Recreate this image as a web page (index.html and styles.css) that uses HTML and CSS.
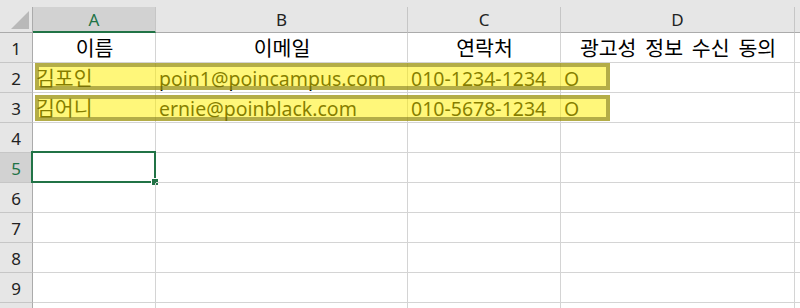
FILE: index.html
```html
<!DOCTYPE html>
<html lang="ko">
<head>
<meta charset="utf-8">
<title>Sheet</title>
<link rel="stylesheet" href="styles.css">
</head>
<body>
<div class="sheet">
  <div class="topstrip"></div>
  <div class="grid">
    <div class="corner">
      <svg class="tri" width="18" height="18" viewBox="0 0 18 18"><polygon points="18,0 18,18 0,18" fill="#b9b9b9"/></svg>
    </div>
    <div class="colh sel">A</div>
    <div class="colh">B</div>
    <div class="colh">C</div>
    <div class="colh">D</div>
    <div class="colh last"></div>

    <div class="rowh">1</div>
    <div class="cell center ko">이름</div>
    <div class="cell center ko">이메일</div>
    <div class="cell center ko">연락처</div>
    <div class="cell center ko wide">광고성 정보 수신 동의</div>
    <div class="cell"></div>

    <div class="rowh">2</div>
    <div class="cell ko">김포인</div>
    <div class="cell">poin1@poincampus.com</div>
    <div class="cell">010-1234-1234</div>
    <div class="cell">O</div>
    <div class="cell"></div>

    <div class="rowh">3</div>
    <div class="cell ko">김어니</div>
    <div class="cell">ernie@poinblack.com</div>
    <div class="cell">010-5678-1234</div>
    <div class="cell">O</div>
    <div class="cell"></div>

    <div class="rowh">4</div>
    <div class="cell"></div><div class="cell"></div><div class="cell"></div><div class="cell"></div><div class="cell"></div>

    <div class="rowh sel">5</div>
    <div class="cell active"><div class="selbox"><div class="handle"></div></div></div>
    <div class="cell"></div><div class="cell"></div><div class="cell"></div><div class="cell"></div>

    <div class="rowh">6</div>
    <div class="cell"></div><div class="cell"></div><div class="cell"></div><div class="cell"></div><div class="cell"></div>

    <div class="rowh">7</div>
    <div class="cell"></div><div class="cell"></div><div class="cell"></div><div class="cell"></div><div class="cell"></div>

    <div class="rowh">8</div>
    <div class="cell"></div><div class="cell"></div><div class="cell"></div><div class="cell"></div><div class="cell"></div>

    <div class="rowh">9</div>
    <div class="cell"></div><div class="cell"></div><div class="cell"></div><div class="cell"></div><div class="cell"></div>

    <div class="rowh"></div>
    <div class="cell"></div><div class="cell"></div><div class="cell"></div><div class="cell"></div><div class="cell"></div>
  </div>
  <div class="hl r2"></div>
  <div class="hl r3"></div>
</div>
</body>
</html>
```

FILE: styles.css
```css
html, body {
  margin: 0;
  padding: 0;
  background: #ffffff;
  overflow: hidden;
}

.sheet {
  position: relative;
  width: 800px;
  height: 308px;
  overflow: hidden;
  font-family: "Noto Sans", "Noto Sans CJK KR", sans-serif;
}

.topstrip {
  height: 7px;
  background: #e6e6e6;
}

.grid {
  display: grid;
  grid-template-columns: 33px 123px 252px 153px 234px 1fr;
  grid-template-rows: 26px repeat(10, 30px);
}

.corner {
  background: #e6e6e6;
  border-right: 1px solid #ababab;
  border-bottom: 1px solid #ababab;
  position: relative;
}

.tri {
  position: absolute;
  left: 11px;
  top: 4px;
}

.colh {
  background: #e6e6e6;
  border-right: 1px solid #c6c6c6;
  border-bottom: 1px solid #ababab;
  display: flex;
  align-items: center;
  justify-content: center;
  font-family: "Noto Sans", sans-serif;
  font-size: 17px;
  color: #222222;
  padding-bottom: 1px;
}

.colh.sel {
  background: #d2d2d2;
  color: #217346;
  border-bottom: 2px solid #217346;
  padding-bottom: 0;
}

.colh.last {
  border-right: none;
}

.rowh {
  background: #e6e6e6;
  border-right: 1px solid #ababab;
  border-bottom: 1px solid #c6c6c6;
  display: flex;
  align-items: center;
  justify-content: center;
  font-family: "Noto Sans", sans-serif;
  font-size: 17px;
  color: #222222;
  padding-top: 1px;
}

.rowh.sel {
  background: #d2d2d2;
  color: #217346;
}

.cell {
  border-right: 1px solid #d4d4d4;
  border-bottom: 1px solid #d4d4d4;
  display: flex;
  align-items: flex-end;
  padding: 0 2px 1px 3px;
  font-size: 19.5px;
  line-height: 25px;
  color: #000000;
  white-space: nowrap;
  position: relative;
}

.cell.ko {
  font-size: 20.5px;
}

.cell.center {
  justify-content: center;
}

.cell.wide {
  word-spacing: 3.5px;
}

.selbox {
  position: absolute;
  left: -2px;
  top: -2px;
  right: -1px;
  bottom: -1px;
  border: 2px solid #217346;
}

.handle {
  position: absolute;
  right: -5px;
  bottom: -5px;
  width: 6px;
  height: 6px;
  background: #217346;
  border: 1px solid #ffffff;
}

.hl {
  position: absolute;
  left: 35px;
  width: 575px;
  box-sizing: border-box;
  border: 4px solid rgba(105, 100, 20, 0.5);
  background: rgba(255, 240, 0, 0.52);
}

.hl.r2 {
  top: 63px;
  height: 27px;
}

.hl.r3 {
  top: 95px;
  height: 26px;
}
```
